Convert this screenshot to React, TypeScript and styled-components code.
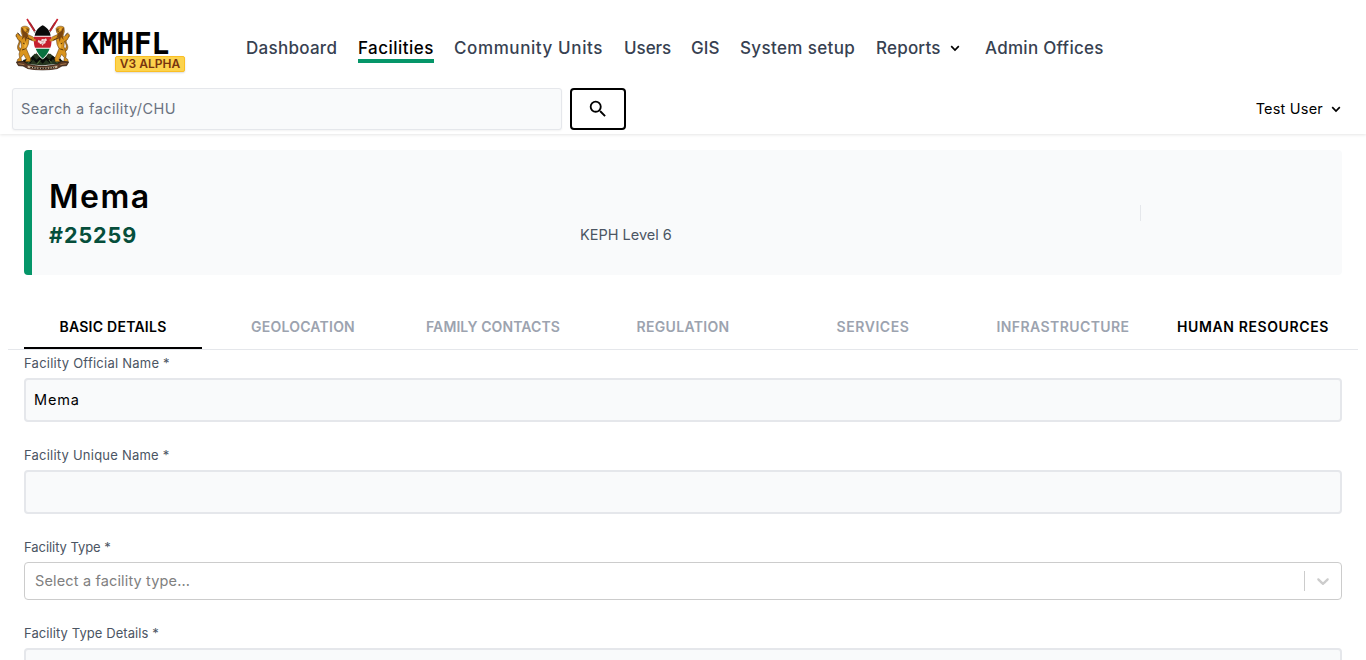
import React from 'react';
import styled, { createGlobalStyle, css } from 'styled-components';

const GlobalStyle = createGlobalStyle`
  *, *::before, *::after { box-sizing: border-box; }
  body { margin: 0; background: #fff; color: #000; font-family: Inter, "Liberation Sans", sans-serif; overflow: hidden; }
  button, input { font: inherit; color: inherit; }
`;

const Page = styled.div`
  height: 660px;
  overflow: hidden;
`;

const Header = styled.header`
  height: 134px;
  box-shadow: 0 1px 3px rgba(0, 0, 0, 0.1);
`;

const TopBar = styled.div`
  display: flex;
  height: 88px;
  padding-left: 10px;
`;

const Brand = styled.a`
  display: flex;
  width: 236px;
  padding-top: 15px;
`;

const Wordmark = styled.div`
  display: flex;
  flex-direction: column;
  width: 110px;
  margin-left: 6px;
  padding-top: 11px;
`;

const BrandName = styled.span`
  height: 30px;
  padding-left: 0.5px;
  font: 700 30px/36px "DejaVu Sans Mono", monospace;
  letter-spacing: -0.65px;
`;

const Release = styled.span`
  align-self: flex-end;
  width: 70px;
  height: 16px;
  margin-right: 6px;
  border: 1px solid #fbbf24;
  border-radius: 2px;
  background: #fcd34d;
  box-shadow: 0 1px 2px rgba(0, 0, 0, 0.15);
  color: #78350f;
  font-size: 12px;
  font-weight: 600;
  line-height: 14px;
  text-align: center;
  white-space: nowrap;
`;

const Nav = styled.nav`
  display: flex;
  gap: 20px;
  padding-top: 35px;
`;

const NavLink = styled.a<{ $width: number; $track: number; $active?: boolean }>`
  width: ${p => p.$width}px;
  height: 28px;
  color: ${p => (p.$active ? '#000' : '#374151')};
  border-bottom: 4px solid ${p => (p.$active ? '#059669' : 'transparent')};
  font-size: 17px;
  font-weight: 530;
  line-height: 27px;
  letter-spacing: ${p => p.$track}px;
  white-space: nowrap;
`;

const ReportsGroup = styled.div`
  display: flex;
  gap: 9px;
  width: 89px;
`;

const NavChevron = styled.svg`
  width: 10px;
  height: 10px;
  margin-top: 8px;
  flex: none;
`;

const SearchBar = styled.div`
  display: flex;
  align-items: center;
  gap: 8px;
  padding: 0 24px 0 12px;
`;

const SearchInput = styled.input`
  width: 550px;
  height: 42px;
  padding: 0 8px 2px;
  border: 1px solid #e5e7eb;
  border-radius: 3px;
  background: #f9fafb;
  box-shadow: 0 1px 2px rgba(0, 0, 0, 0.05);
  font-size: 14.5px;
  letter-spacing: 0.41px;
  &::placeholder { color: #6b7280; opacity: 1; }
`;

const SearchButton = styled.button`
  display: flex;
  align-items: center;
  justify-content: center;
  width: 56px;
  height: 42px;
  padding: 0;
  border: 2px solid #000;
  border-radius: 4px;
  background: #fff;
`;

const UserMenu = styled.div`
  display: flex;
  align-items: center;
  gap: 8px;
  margin-left: auto;
  font-size: 14.5px;
  letter-spacing: 0.2px;
`;

const UserName = styled.span`
  padding-bottom: 2px;
`;

const Summary = styled.section`
  display: flex;
  height: 125px;
  margin: 16px 24px 0;
  padding-left: 17px;
  border-left: 8px solid #059669;
  border-radius: 4px;
  background: #f9fafb;
`;

const Identity = styled.div`
  width: 531px;
  padding-top: 26px;
`;

const FacilityName = styled.h1`
  margin: 0;
  font-size: 32px;
  font-weight: 630;
  line-height: 42px;
  letter-spacing: 1.5px;
`;

const FacilityCode = styled.div`
  color: #064e3b;
  font-size: 21.5px;
  font-weight: 670;
  line-height: 35px;
  letter-spacing: 0.95px;
`;

const Level = styled.div`
  width: 560px;
  padding-top: 74px;
  color: #4b5563;
  font-size: 14.5px;
  line-height: 21px;
`;

const Divider = styled.div`
  width: 1px;
  height: 16px;
  margin-top: 55px;
  background: #e5e7eb;
`;

const Tabs = styled.div`
  display: grid;
  grid-template-columns: repeat(7, 178px);
  column-gap: 12px;
  height: 46px;
  margin: 29px 8px 0;
  padding: 0 16px;
  border-bottom: 1px solid #e5e7eb;
`;

const Tab = styled.button<{ $track: number; $tone?: 'selected' | 'strong' }>`
  height: 45px;
  padding: 1px 0 0;
  border: 0;
  border-bottom: 2px solid ${p => (p.$tone === 'selected' ? '#000' : 'transparent')};
  background: none;
  color: ${p => (p.$tone ? '#000' : '#9ca3af')};
  font-size: 14px;
  font-weight: 590;
  letter-spacing: ${p => p.$track}px;
  white-space: nowrap;
`;

const Form = styled.form`
  padding: 3px 24px 0;
`;

const Field = styled.div`
  margin-bottom: 23px;
`;

const Label = styled.label<{ $track: number }>`
  display: block;
  height: 25px;
  color: #4b5563;
  font-size: 13px;
  line-height: 20px;
  letter-spacing: ${p => p.$track}px;
`;

const fieldText = css`
  font-size: 14.5px;
`;

const TextInput = styled.input`
  ${fieldText}
  display: block;
  width: 100%;
  height: 44px;
  padding: 0 8px 2px;
  border: 2px solid #e5e7eb;
  border-radius: 4px;
  background: #f9fafb;
  letter-spacing: 0.8px;
`;

const Select = styled.div`
  ${fieldText}
  display: flex;
  align-items: center;
  height: 38px;
  padding: 0 8px 0 10px;
  border: 1px solid #ccc;
  border-radius: 4px;
  color: #808080;
  letter-spacing: 0.15px;
`;

const Placeholder = styled.span`
  padding-bottom: 2px;
`;

const SelectDivider = styled.span`
  width: 1px;
  height: 20px;
  margin: 0 8px 0 auto;
  background: #ccc;
`;

const Chevron = () => (
  <NavChevron viewBox="0 0 10 10" fill="none" stroke="#000" strokeWidth="1.7">
    <path d="M1.2 3.2 5 7l3.8-3.8" />
  </NavChevron>
);

const UserChevron = styled.svg`
  width: 10px;
  height: 10px;
  margin-right: 1px;
`;

const Lion = () => (
  <g>
    <path d="M36 112C22 109 20 96 25 87S26 74 22 68l-4-4 1-5 7 2c9 8 8 17 4 24-5 10-3 16 6 18" fill="#c78318" stroke="#4b2b0b" strokeWidth="1.5" />
    <path d="M34 37c8-6 21-4 24 4l-2 11-4 6 16 7 9 8-2 7-18-7-2 15-6 13 7 17 6 13-2 9H46l3-7-8-15-8 10 2 12H21l2-7 6-4-2-12 7-22-1-15-10-7-5-13 4-5 11 10 4-3-4-12z" fill="#d9941e" stroke="#56320c" strokeWidth="1.5" />
    <path d="m34 40 4 22-3 13 8-9 4 15 4-16 7 8-7-20-9-5-4-9z" fill="#794611" />
    <path d="m47 42 9 1M49 49l7-2M39 84l9 6M36 105l11-4M48 68l19 7M23 53l8 9" stroke="#3b220a" strokeWidth="2.5" />
    <path d="m41 39 10 3-6 5zM42 91l5-9 4 10-7 9z" fill="#f1b33a" />
  </g>
);

const Crest = () => (
  <svg width="65" height="60" viewBox="0 0 195 180">
    <g fill="none" strokeWidth="3">
      <path d="m56 23 73 116M138 23 65 139" stroke="#8b7469" />
      <path d="m51 12 23 36M143 12l-23 36" stroke="#c8202f" strokeWidth="5" />
      <path d="m60 22 17 27M134 22l-17 27" stroke="#761820" strokeWidth="2" />
    </g>
    <path d="m28 149 13-15 20-5 13-13 22 2 25-2 17 14 18 5 10 15-24-3-45 4-44-3z" fill="#26351f" />
    <path d="m40 141 11-5 9 5 9-13 10 11 10-8 9 10 10-11 11 9 9-12 12 10 13-3" fill="none" stroke="#080b08" strokeWidth="7" />
    <path d="m51 147 14-12m17 12 9-12m34 10-8-10m28 12-8-9" stroke="#51703b" strokeWidth="3" />
    <Lion />
    <g transform="translate(196 0) scale(-1 1)"><Lion /></g>
    <path d="M98 32c16 9 27 23 27 46 0 24-12 45-27 55-15-10-27-31-27-55 0-23 11-37 27-46z" fill="#fff" />
    <path d="M98 31c12 6 20 14 24 31H74c4-17 12-25 24-31z" fill="#090909" />
    <path d="M72 65h52c1 11 1 23-3 33H75c-4-10-4-22-3-33z" fill="#c5202d" />
    <path d="M77 101h42c-5 13-13 23-21 30-8-7-16-17-21-30z" fill="#08713f" />
    <path d="m85 74 6 4 5-6 7 1 5-3 3 6-5 4 1 4-7 4-2 5-2-5-6-1-2-4-5-1z" fill="#f5dede" />
    <path d="m93 77 5 3 5-3m-9 9 7-2" stroke="#b57777" strokeWidth="2" fill="none" />
    <path d="M66 72l11 5M130 72l-11 5" stroke="#cf8b23" strokeWidth="6" />
    <path d="m19 141 21-2 15 9c26 7 60 7 85 0l15-9 21 2-6 11-14 1-15 8c-29 5-58 5-87 0l-15-8-14-1z" fill="#5c3a24" stroke="#24160d" strokeWidth="2" />
    <path d="M52 151c29 8 63 8 91 0v8c-28 5-62 5-91 0z" fill="#d8c8aa" stroke="#5d3420" strokeWidth="2" />
    <path d="M61 157c24 4 50 4 74 0" stroke="#1b1713" strokeWidth="4" strokeDasharray="5 3" fill="none" />
    <path d="m25 146 18 3m126-3-18 3" stroke="#a57548" strokeWidth="3" />
  </svg>
);

export default function App() {
  return (
    <Page>
      <GlobalStyle />
      <Header>
        <TopBar>
          <Brand>
            <Crest />
            <Wordmark>
              <BrandName>KMHFL</BrandName>
              <Release>V3 ALPHA</Release>
            </Wordmark>
          </Brand>
          <Nav>
            <NavLink $width={92} $track={0.28}>Dashboard</NavLink>
            <NavLink $width={76} $track={0.46} $active>Facilities</NavLink>
            <NavLink $width={150} $track={0.6}>Community Units</NavLink>
            <NavLink $width={47} $track={-0.05}>Users</NavLink>
            <NavLink $width={29} $track={0.1}>GIS</NavLink>
            <NavLink $width={116} $track={0.36}>System setup</NavLink>
            <ReportsGroup>
              <NavLink $width={65} $track={0.2}>Reports</NavLink>
              <Chevron />
            </ReportsGroup>
            <NavLink $width={120} $track={0.28}>Admin Offices</NavLink>
          </Nav>
        </TopBar>
        <SearchBar>
          <SearchInput placeholder="Search a facility/CHU" />
          <SearchButton aria-label="Search">
            <svg width="22" height="22" viewBox="0 0 24 24">
              <path d="M15.5 14h-.79l-.28-.27A6.47 6.47 0 0 0 16 9.5 6.5 6.5 0 1 0 9.5 16c1.61 0 3.09-.59 4.23-1.57l.27.28v.79l5 4.99L20.49 19zm-6 0a4.5 4.5 0 1 1 0-9 4.5 4.5 0 0 1 0 9z" />
            </svg>
          </SearchButton>
          <UserMenu>
            <UserName>Test User</UserName>
            <UserChevron viewBox="0 0 10 10" fill="none" stroke="#000" strokeWidth="1.7">
              <path d="M1.2 3.2 5 7l3.8-3.8" />
            </UserChevron>
          </UserMenu>
        </SearchBar>
      </Header>

      <Summary>
        <Identity>
          <FacilityName>Mema</FacilityName>
          <FacilityCode>#25259</FacilityCode>
        </Identity>
        <Level>KEPH Level 6</Level>
        <Divider />
      </Summary>

      <Tabs>
        <Tab $track={0.25} $tone="selected">BASIC DETAILS</Tab>
        <Tab $track={0.23}>GEOLOCATION</Tab>
        <Tab $track={0.1}>FAMILY CONTACTS</Tab>
        <Tab $track={0.32}>REGULATION</Tab>
        <Tab $track={0.57}>SERVICES</Tab>
        <Tab $track={0.42}>INFRASTRUCTURE</Tab>
        <Tab $track={0.61} $tone="strong">HUMAN RESOURCES</Tab>
      </Tabs>

      <Form>
        <Field>
          <Label $track={0.24}>Facility Official Name *</Label>
          <TextInput defaultValue="Mema" />
        </Field>
        <Field>
          <Label $track={0.22}>Facility Unique Name *</Label>
          <TextInput />
        </Field>
        <Field>
          <Label $track={-0.06}>Facility Type *</Label>
          <Select>
            <Placeholder>Select a facility type...</Placeholder>
            <SelectDivider />
            <svg width="20" height="20" viewBox="0 0 20 20" fill="#ccc">
              <path d="M4.516 7.548c.436-.446 1.043-.481 1.576 0L10 11.295l3.908-3.747c.533-.481 1.141-.446 1.574 0 .436.445.408 1.197 0 1.615-.406.418-4.695 4.502-4.695 4.502a1.095 1.095 0 0 1-1.576 0S4.924 9.581 4.516 9.163s-.436-1.17 0-1.615z" />
            </svg>
          </Select>
        </Field>
        <Field>
          <Label $track={0.08}>Facility Type Details *</Label>
          <TextInput />
        </Field>
      </Form>
    </Page>
  );
}
